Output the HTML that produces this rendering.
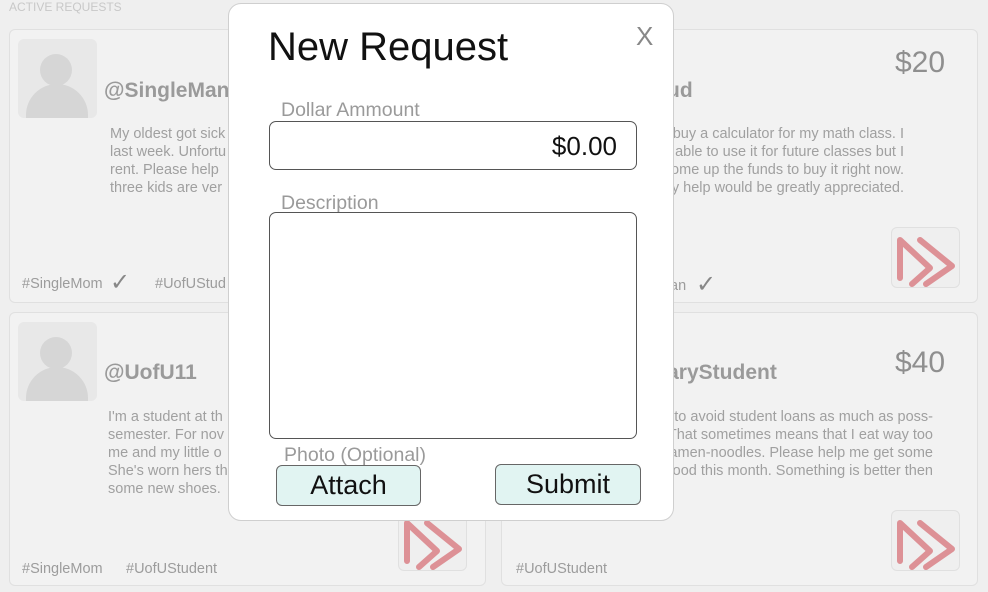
<!DOCTYPE html>
<html><head><meta charset="utf-8"><style>
*{margin:0;padding:0;box-sizing:border-box}
body{width:988px;height:592px;background:#efefef;position:relative;overflow:hidden;font-family:"Liberation Sans",Arial,sans-serif}
.a{position:absolute;white-space:nowrap}
.card{position:absolute;background:#f2f2f2;border:1px solid #e0e0e0;border-radius:6px}
.av{position:absolute;width:79px;height:79px;background:#e8e8e8;border-radius:6px;overflow:hidden}
.av .h{position:absolute;left:22px;top:15px;width:32px;height:32px;border-radius:50%;background:#d6d6d6}
.av .b{position:absolute;left:8px;top:45px;width:62px;height:45px;border-radius:31px 31px 0 0;background:#d6d6d6}
.un{font-size:21px;font-weight:bold;color:#9a9a9a}
.tx{font-size:14.5px;color:#a0a0a0;line-height:18px}
.tag{font-size:14.5px;color:#9c9c9c}
.ck{font-size:24px;color:#888;position:absolute;top:-8px}
.amt{font-size:30px;color:#8f8f8f}
.ic{position:absolute;width:69px;height:61px;border:1px solid #e0e0e0;border-radius:6px;background:#efefef}
.modal{position:absolute;left:228px;top:3px;width:446px;height:518px;background:#fff;border:1px solid #cfcfcf;border-radius:13px}
.lbl{font-size:19.5px;color:#9a9a9a}
.box{position:absolute;border:1px solid #555;border-radius:7px;background:#fff}
.btn{position:absolute;background:#e1f4f2;border:1px solid #666;border-radius:6px;font-size:27px;color:#111;text-align:center;line-height:38px}
</style></head><body>
<div class="a" style="left:9px;top:0px;font-size:12px;color:#c8c8c8">ACTIVE REQUESTS</div>

<div class="card" style="left:9px;top:29px;width:477px;height:274px"></div>
<div class="av" style="left:18px;top:39px"><div class="h"></div><div class="b"></div></div>
<div class="a un" style="left:104px;top:79px">@SingleMan</div>
<div class="a tx" style="left:110px;top:125px">My oldest got sick<br>last week. Unfortu<br>rent. Please help<br>three kids are ver</div>
<div class="a tag" style="left:22px;top:276px">#SingleMom <span class="ck" style="left:88px">✓</span></div>
<div class="a tag" style="left:155px;top:276px">#UofUStud</div>

<div class="card" style="left:501px;top:29px;width:477px;height:274px"></div>
<div class="a amt" style="left:895px;top:46px">$20</div>
<div class="a un" style="left:660px;top:79px">tud</div>
<div class="a tx" style="right:84px;top:125px;text-align:right">Please help me buy a calculator for my math class. I<br>will be able to use it for future classes but I<br>can't come up the funds to buy it right now.<br>Any help would be greatly appreciated.</div>
<div class="a tag" style="left:670px;top:278px">an<span class="ck" style="left:26px">✓</span></div>
<div class="ic" style="left:891px;top:227px"><svg width="69" height="61" viewBox="0 0 69 61"><g fill="none" stroke="#d97a80" stroke-width="6" stroke-linecap="round" stroke-linejoin="round" opacity=".8"><path d="M8 50 V12 L38 40 L20 56"/><path d="M28 12 L60 38 L34 56"/></g></svg></div>

<div class="card" style="left:9px;top:312px;width:477px;height:274px"></div>
<div class="av" style="left:18px;top:322px"><div class="h"></div><div class="b"></div></div>
<div class="a un" style="left:104px;top:361px">@UofU11</div>
<div class="a tx" style="left:108px;top:408px">I'm a student at th<br>semester. For nov<br>me and my little o<br>She's worn hers th<br>some new shoes.</div>
<div class="a tag" style="left:22px;top:561px">#SingleMom</div>
<div class="a tag" style="left:126px;top:561px">#UofUStudent</div>
<div class="ic" style="left:398px;top:510px"><svg width="69" height="61" viewBox="0 0 69 61"><g fill="none" stroke="#d97a80" stroke-width="6" stroke-linecap="round" stroke-linejoin="round" opacity=".8"><path d="M8 50 V12 L38 40 L20 56"/><path d="M28 12 L60 38 L34 56"/></g></svg></div>

<div class="card" style="left:501px;top:312px;width:477px;height:274px"></div>
<div class="a amt" style="left:895px;top:346px">$40</div>
<div class="a un" style="left:600px;top:361px">@FrugaryStudent</div>
<div class="a tx" style="right:55px;top:408px;text-align:right">I'm trying to avoid student loans as much as poss-<br>ible. That sometimes means that I eat way too<br>many ramen-noodles. Please help me get some<br>food this month. Something is better then</div>
<div class="a tag" style="left:516px;top:561px">#UofUStudent</div>
<div class="ic" style="left:891px;top:510px"><svg width="69" height="61" viewBox="0 0 69 61"><g fill="none" stroke="#d97a80" stroke-width="6" stroke-linecap="round" stroke-linejoin="round" opacity=".8"><path d="M8 50 V12 L38 40 L20 56"/><path d="M28 12 L60 38 L34 56"/></g></svg></div>

<div class="modal">
<div class="a" style="left:39px;top:21px;font-size:40px;color:#111">New Request</div>
<div class="a" style="left:407px;top:17px;font-size:26px;color:#888">X</div>
<div class="a lbl" style="left:52px;top:95px">Dollar Ammount</div>
<div class="box" style="left:40px;top:117px;width:368px;height:49px"><div class="a" style="right:19px;top:9px;font-size:26px;color:#111">$0.00</div></div>
<div class="a lbl" style="left:52px;top:188px">Description</div>
<div class="box" style="left:40px;top:208px;width:368px;height:227px"></div>
<div class="a lbl" style="left:55px;top:440px">Photo (Optional)</div>
<div class="btn" style="left:47px;top:461px;width:145px;height:41px">Attach</div>
<div class="btn" style="left:266px;top:460px;width:146px;height:41px">Submit</div>
</div>
</body></html>
